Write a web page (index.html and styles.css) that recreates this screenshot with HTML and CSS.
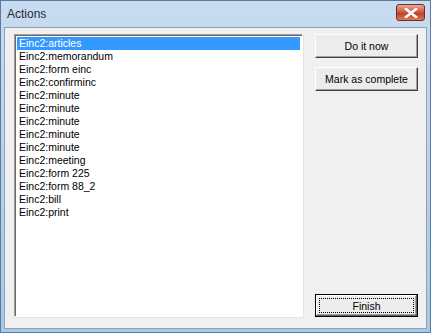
FILE: index.html
```html
<!DOCTYPE html>
<html lang="en">
<head>
    <meta charset="UTF-8">
    <title>Actions</title>
    <link rel="stylesheet" href="styles.css">
</head>
<body>

    <div class="window">
        <div class="title-bar">
            <span class="title">Actions</span>
            <div class="close-btn">
                <svg width="14" height="10" viewBox="0 0 14 10">
                    <path d="M2 1 L12 9 M12 1 L2 9" stroke="#ffffff" stroke-width="2.6" stroke-linecap="square"/>
                </svg>
            </div>
        </div>
        <div class="client">
            <div class="list-box">
                <div class="item selected">Einc2:articles</div>
                <div class="item">Einc2:memorandum</div>
                <div class="item">Einc2:form einc</div>
                <div class="item">Einc2:confirminc</div>
                <div class="item">Einc2:minute</div>
                <div class="item">Einc2:minute</div>
                <div class="item">Einc2:minute</div>
                <div class="item">Einc2:minute</div>
                <div class="item">Einc2:minute</div>
                <div class="item">Einc2:meeting</div>
                <div class="item">Einc2:form 225</div>
                <div class="item">Einc2:form 88_2</div>
                <div class="item">Einc2:bill</div>
                <div class="item">Einc2:print</div>
            </div>
            <div class="button-col">
                <button class="btn">Do it now</button>
                <button class="btn">Mark as complete</button>
                <div class="spacer"></div>
                <button class="btn default"><span class="focus">Finish</span></button>
            </div>
        </div>
    </div>

</body>
</html>
```

FILE: styles.css
```css
body {
    margin: 0;
    font-family: "Liberation Sans", Arial, sans-serif;
    font-size: 10.5px;
}

.window {
    width: 431px;
    height: 333px;
    box-sizing: border-box;
    background: linear-gradient(to bottom, #c9dcef, #a9c7e6);
    border: 1px solid #5a7a9e;
    display: flex;
    flex-direction: column;
}

.title-bar {
    height: 26px;
    display: flex;
    align-items: center;
    padding: 0 5px 0 6px;
}

.title {
    flex: 1;
    font-family: "Liberation Sans", Arial, sans-serif;
    font-size: 12px;
    color: #1e2a3a;
}

.close-btn {
    width: 27px;
    height: 15px;
    border: 1px solid #7a2a20;
    border-radius: 3px;
    background: linear-gradient(to bottom, #e9a99a, #c9523e 50%, #b83a24 51%, #d97a5a);
    display: flex;
    align-items: center;
    justify-content: center;
    margin-top: -3px;
}

.client {
    flex: 1;
    margin: 0 3px 3px 3px;
    background-color: #f0f0f0;
    border: 1px solid #8aa4c0;
    display: flex;
    padding: 6px 8px 11px 9px;
}

.list-box {
    width: 289px;
    background-color: #ffffff;
    border-top: 1px solid #a0a0a0;
    border-left: 1px solid #a0a0a0;
    border-right: 1px solid #ffffff;
    border-bottom: 1px solid #ffffff;
    box-shadow: inset 1px 1px 0 #696969, 1px 1px 0 #e3e3e3;
    padding: 2px 2px;
    box-sizing: border-box;
}

.item {
    height: 13px;
    line-height: 13px;
    padding-left: 2px;
    color: #000000;
}

.item.selected {
    background-color: #3399ff;
    color: #ffffff;
}

.button-col {
    margin-left: auto;
    width: 103px;
    display: flex;
    flex-direction: column;
    gap: 9px;
}

.spacer {
    flex: 1;
}

.btn {
    height: 24px;
    font-family: "Liberation Sans", Arial, sans-serif;
    font-size: 10.5px;
    color: #000000;
    background-color: #ececec;
    border-top: 1px solid #ffffff;
    border-left: 1px solid #ffffff;
    border-right: 1px solid #404040;
    border-bottom: 1px solid #404040;
    box-shadow: inset -1px -1px 0 #a0a0a0;
    padding: 0;
}

.btn.default {
    height: 23px;
    border: 1px solid #000000;
    box-shadow: inset -1px -1px 0 #606060, inset 1px 1px 0 #ffffff, inset -2px -2px 0 #a0a0a0;
    display: flex;
    padding: 3px;
}

.focus {
    flex: 1;
    display: flex;
    align-items: center;
    justify-content: center;
    border: 1px dotted #000000;
}
```
